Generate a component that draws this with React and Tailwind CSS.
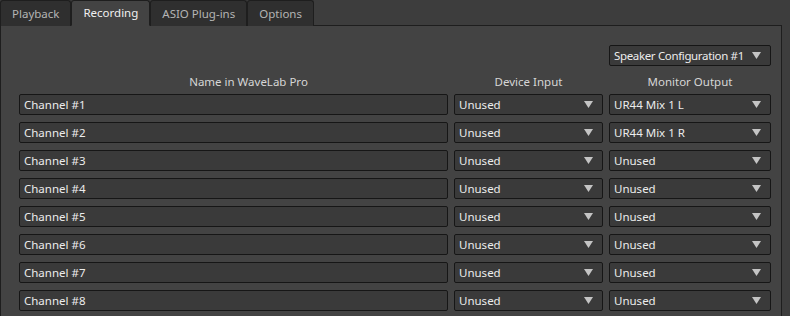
import React from 'react';

const tabs = ['Playback', 'Recording', 'ASIO Plug-ins', 'Options'];

const channels = [
  { name: 'Channel #1', input: 'Unused', output: 'UR44 Mix 1 L' },
  { name: 'Channel #2', input: 'Unused', output: 'UR44 Mix 1 R' },
  { name: 'Channel #3', input: 'Unused', output: 'Unused' },
  { name: 'Channel #4', input: 'Unused', output: 'Unused' },
  { name: 'Channel #5', input: 'Unused', output: 'Unused' },
  { name: 'Channel #6', input: 'Unused', output: 'Unused' },
  { name: 'Channel #7', input: 'Unused', output: 'Unused' },
  { name: 'Channel #8', input: 'Unused', output: 'Unused' },
];

const Arrow = () => (
  <svg width="9" height="7" viewBox="0 0 9 7" className="shrink-0">
    <path d="M0 0h9L4.5 7z" fill="#c4c4c4" />
  </svg>
);

const Combo = ({ value, className, textClass = '' }) => (
  <div className={`flex items-center h-[21px] pl-[4px] pr-[9px] bg-[#3a3a3a] border border-[#161616] rounded-[2px] text-[#ececec] ${className}`}>
    <span className={`flex-1 whitespace-nowrap leading-[15px] ${textClass}`}>{value}</span>
    <Arrow />
  </div>
);

const App = () => {
  return (
    <div className="w-[790px] h-[316px] overflow-hidden bg-[#3d3d3d] text-[11.5px] leading-none" style={{ fontFamily: '"Noto Sans", "Open Sans", sans-serif' }}>
      {/* Tabs */}
      <div className="flex h-[26px] items-end">
        {tabs.map((t) => {
          const active = t === 'Recording';
          return (
            <div
              key={t}
              className={`h-[26px] flex items-center justify-center px-[11px] rounded-t-[3px] border border-[#1e1e1e] ${
                active
                  ? 'bg-[#434343] text-[#f0f0f0] border-b-[#434343] relative z-10'
                  : 'bg-[#2f2f2f] text-[#b4b4b4] border-b-0 h-[25px]'
              }`}
            >
              {t}
            </div>
          );
        })}
      </div>

      {/* Panel */}
      <div className="w-[782px] h-[300px] -mt-px bg-[#434343] border border-[#1e1e1e] pl-[18px] pt-[19px]">
        <div className="flex justify-end pr-[10px]">
          <Combo value="Speaker Configuration #1" className="w-[162px] pr-[7px]" textClass="tracking-[-0.35px]" />
        </div>

        <div className="flex h-[28px] items-end pb-[7px] text-[#d6d6d6]">
          <div className="w-[429px] text-center pl-[30px]">Name in WaveLab Pro</div>
          <div className="w-[149px] ml-[6px] text-center">Device Input</div>
          <div className="w-[162px] ml-[6px] text-center">Monitor Output</div>
        </div>

        <div className="flex flex-col gap-[7px]">
          {channels.map((c) => (
            <div key={c.name} className="flex gap-[6px]">
              <div className="w-[429px] h-[21px] flex items-center pl-[4px] bg-[#3a3a3a] border border-[#161616] rounded-[2px] text-[#ececec]">
                <span className="leading-[15px]">{c.name}</span>
              </div>
              <Combo value={c.input} className="w-[149px]" />
              <Combo value={c.output} className="w-[162px]" />
            </div>
          ))}
        </div>
      </div>
    </div>
  );
};

export default App;
